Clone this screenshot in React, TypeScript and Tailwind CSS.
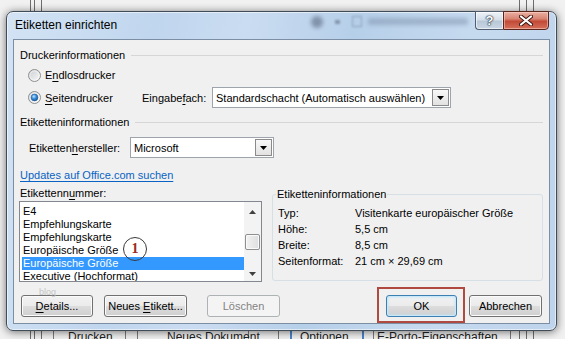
import React from "react";

function U({ children }: { children: React.ReactNode }) {
  return <span className="underline decoration-1 underline-offset-[2px]">{children}</span>;
}

function Radio({ checked = false }: { checked?: boolean }) {
  return (
    <svg width="13" height="13" viewBox="0 0 13 13" className="shrink-0">
      <defs>
        <linearGradient id="rbg" x1="0" y1="0" x2="1" y2="1">
          <stop offset="0" stopColor="#c9ccd1" />
          <stop offset="1" stopColor="#fafafa" />
        </linearGradient>
        <radialGradient id="rdot" cx="0.4" cy="0.35" r="0.75">
          <stop offset="0" stopColor="#bfe6ff" />
          <stop offset="0.45" stopColor="#3a8fde" />
          <stop offset="1" stopColor="#0c4c8f" />
        </radialGradient>
      </defs>
      <circle cx="6.5" cy="6.5" r="6" fill="url(#rbg)" stroke="#8e8f8f" strokeWidth="1" />
      <circle cx="6.5" cy="6.5" r="4.6" fill="none" stroke="#ffffff" strokeOpacity="0.55" strokeWidth="1" />
      {checked && <circle cx="6.5" cy="6.5" r="3.4" fill="url(#rdot)" stroke="#1a4f86" strokeWidth="0.5" />}
    </svg>
  );
}

function DropBtn() {
  return (
    <div className="m-px flex w-[17px] shrink-0 items-center justify-center self-stretch border border-[#8a8a8a] bg-[linear-gradient(to_bottom,#f8f8f8,#e2e2e2)]">
      <svg width="7" height="4" viewBox="0 0 7 4">
        <path d="M0 0H7L3.5 4Z" fill="#000" />
      </svg>
    </div>
  );
}

function Btn({
  children,
  className,
  disabled = false,
  focused = false,
}: {
  children: React.ReactNode;
  className: string;
  disabled?: boolean;
  focused?: boolean;
}) {
  const base = "flex h-[22px] items-center justify-center rounded-[3px] border ";
  const look = disabled
    ? "border-[#adb2b5] bg-[#f4f4f4] text-[#838383]"
    : focused
    ? "border-[#3c7fb1] bg-[linear-gradient(to_bottom,#f2f2f2_0%,#ebebeb_50%,#dddddd_50%,#cfcfcf_100%)] shadow-[inset_0_0_0_1px_#c8e8fa,inset_0_0_3px_1px_#bfe2f6] text-black"
    : "border-[#707070] bg-[linear-gradient(to_bottom,#f2f2f2_0%,#ebebeb_50%,#dddddd_50%,#cfcfcf_100%)] shadow-[inset_0_0_0_1px_#fbfbfb] text-black";
  return <div className={base + look + " " + className}>{children}</div>;
}

function Scrollbar() {
  return (
    <div className="flex w-[17px] shrink-0 flex-col bg-[#f3f3f3]">
      <div className="flex h-[17px] items-center justify-center pt-[3px]">
        <svg width="7" height="4" viewBox="0 0 7 4">
          <path d="M0 4H7L3.5 0Z" fill="#404040" />
        </svg>
      </div>
      <div className="flex flex-1 flex-col">
        <div className="h-[15px]" />
        <div className="mx-px h-[16px] rounded-[2px] border border-[#8e8f8f] bg-[linear-gradient(to_right,#f2f2f2,#dedede)] shadow-[inset_0_0_0_1px_#fafafa]" />
      </div>
      <div className="flex h-[17px] items-center justify-center pt-[2px]">
        <svg width="7" height="4" viewBox="0 0 7 4">
          <path d="M0 0H7L3.5 4Z" fill="#404040" />
        </svg>
      </div>
    </div>
  );
}

const items = [
  "E4",
  "Empfehlungskarte",
  "Empfehlungskarte",
  "Europäische Größe",
  "Europäische Größe",
  "Executive (Hochformat)",
];

const info: [string, string][] = [
  ["Typ:", "Visitenkarte europäischer Größe"],
  ["Höhe:", "5,5 cm"],
  ["Breite:", "8,5 cm"],
  ["Seitenformat:", "21 cm × 29,69 cm"],
];

function Backdrop() {
  const dark = [30, 34, 41, 519, 526, 533];
  const bottomLines = [53, 125, 137, 248, 278, 373, 510];
  const blueLines = [290, 362];
  return (
    <svg className="absolute inset-0" width="565" height="339" viewBox="0 0 565 339">
      {dark.map((x) => (
        <rect key={x} x={x} y="0" width="1" height="339" fill="#6e6e6e" />
      ))}
      {bottomLines.map((x) => (
        <rect key={"b" + x} x={x} y="330" width="1" height="9" fill="#7a7a7a" />
      ))}
      {blueLines.map((x) => (
        <rect key={"c" + x} x={x} y="330" width="2" height="9" fill="#4a86c8" />
      ))}
    </svg>
  );
}

export default function App() {
  return (
    <div className="relative h-[339px] w-[565px] overflow-hidden bg-[#f1f1f1] font-['Liberation_Sans',Arial,sans-serif] text-[11px] text-black">
      <Backdrop />
      <div className="absolute left-0 top-[330px] flex text-[12px] leading-[14px] text-[#222]">
        <div className="w-[68px]" />
        <div className="w-[99px]">Drucken</div>
        <div className="w-[133px]">Neues Dokument</div>
        <div className="w-[77px]">Optionen</div>
        <div>E-Porto-Eigenschaften</div>
      </div>

      {/* Dialog window */}
      <div className="absolute left-[6px] top-[11px] flex h-[320px] w-[551px] flex-col rounded-[7px] border border-[#414c59] bg-[linear-gradient(100deg,#d3e3f4_0%,#c0d6ee_25%,#cadcf1_40%,#b6cfe9_58%,#c6daef_78%,#bed4ec_100%)] shadow-[0_1px_8px_rgba(0,0,0,0.55),inset_0_0_0_1px_rgba(255,255,255,0.55)]">
        {/* Title bar */}
        <div className="relative flex h-[27px] shrink-0 items-start">
          <div className="absolute left-[304px] top-[4px] h-[12px] w-[12px] rounded-full bg-[#56667c] opacity-60 blur-[2px]" />
          <div className="absolute left-[328px] top-[8px] h-[4px] w-[5px] bg-[#5f6f86] opacity-60 blur-[1px]" />
          <div className="absolute left-[345px] top-[4px] h-[11px] w-[10px] border border-[#6f8099] opacity-60 blur-[1px]" />
          <div className="absolute left-[361px] top-[6px] h-[7px] w-[100px] bg-[#7c8fa9] opacity-50 blur-[2px]" />
          <span className="relative ml-[8px] mt-[6px] text-[12px] leading-[14px] text-black">Etiketten einrichten</span>
          <div className="flex-1" />
          <div className="relative mr-[7px] -mt-[1px] flex h-[19px]">
            <div className="flex w-[28px] items-center justify-center rounded-bl-[4px] border border-r-0 border-[#505d6e] bg-[linear-gradient(to_bottom,#eef3f8_0%,#d5dfea_45%,#b9c8d8_55%,#c9d6e4_100%)] shadow-[inset_0_0_0_1px_rgba(255,255,255,0.6)]">
              <span className="text-[13px] font-bold leading-none text-white [text-shadow:0_0_1px_#1d2a38,0_0_1px_#1d2a38,0_0_2px_#1d2a38]">?</span>
            </div>
            <div className="flex w-[46px] items-center justify-center rounded-br-[4px] border border-[#5a241c] bg-[linear-gradient(to_bottom,#eab0a2_0%,#d98473_40%,#c24a36_55%,#d5705c_100%)] shadow-[inset_0_0_0_1px_rgba(255,220,210,0.5)]">
              <svg width="14" height="11" viewBox="0 0 14 11">
                <path d="M2 1.5L12 9.5M12 1.5L2 9.5" stroke="#3b1510" strokeWidth="4" strokeLinecap="round" />
                <path d="M2 1.5L12 9.5M12 1.5L2 9.5" stroke="#ffffff" strokeWidth="2.2" strokeLinecap="round" />
              </svg>
            </div>
          </div>
        </div>

        {/* Client area */}
        <div className="mx-[6px] mb-[6px] flex flex-1 flex-col border border-[#7c8ea3] bg-[#f0f0f0]">
          <div className="mt-[8px] flex h-[14px] items-center gap-[6px] px-[6px] leading-[14px]">
            <span>Druckerinformationen</span>
            <div className="h-px flex-1 bg-[#d6d6d6]" />
          </div>

          <div className="mt-[6px] flex h-[14px] items-center pl-[14px] leading-[14px]">
            <Radio />
            <span className="ml-[4px]">
              E<U>n</U>dlosdrucker
            </span>
          </div>

          <div className="mt-[5px] flex h-[21px] items-center pl-[14px] leading-[14px]">
            <Radio checked />
            <span className="ml-[4px] w-[97px]">
              <U>S</U>eitendrucker
            </span>
            <span className="w-[70px]">
              Eingabe<U>f</U>ach:
            </span>
            <div className="flex h-[21px] w-[239px] items-center border border-[#9ea4ab] bg-white">
              <span className="flex-1 pl-[3px]">Standardschacht (Automatisch auswählen)</span>
              <DropBtn />
            </div>
          </div>

          <div className="mt-[7px] flex h-[14px] items-center gap-[6px] px-[6px] leading-[14px]">
            <span>Etiketteninformationen</span>
            <div className="h-px flex-1 bg-[#d6d6d6]" />
          </div>

          <div className="mt-[8px] flex h-[21px] items-center pl-[15px] leading-[14px]">
            <span className="w-[101px]">
              Etiketten<U>h</U>ersteller:
            </span>
            <div className="flex h-[21px] w-[144px] items-center border border-[#9ea4ab] bg-white">
              <span className="flex-1 pl-[3px]">Microsoft</span>
              <DropBtn />
            </div>
          </div>

          <div className="mt-[10px] flex h-[14px] items-center pl-[6px] leading-[14px]">
            <span className="text-[#0863c4] underline decoration-1 underline-offset-[2px]">Updates auf Office.com suchen</span>
          </div>

          <div className="mt-[4px] flex gap-[10px] pl-[5px]">
            <div className="flex w-[243px] flex-col">
              <div className="h-[14px] pl-px leading-[14px]">
                Etikettenn<U>u</U>mmer:
              </div>
              <div className="mt-px flex h-[81px] border border-[#828790] bg-white">
                <div className="flex-1 overflow-hidden pl-[2px] pt-[3px]">
                  {items.map((t, i) => (
                    <div
                      key={i}
                      className={
                        i === 4
                          ? "h-[13px] bg-[#3399ff] pl-px leading-[13px] text-white"
                          : "h-[13px] pl-px leading-[13px]"
                      }
                    >
                      {t}
                    </div>
                  ))}
                </div>
                <Scrollbar />
              </div>
            </div>

            <div className="relative mt-[8px] h-[87px] w-[271px] rounded-[3px] border border-[#d5dfe5] pl-[5px] pt-[10px]">
              <span className="absolute left-[3px] top-[-8px] bg-[#f0f0f0] px-px leading-[14px]">Etiketteninformationen</span>
              <div className="grid grid-cols-[77px_1fr] leading-[16px]">
                {info.map(([k, v]) => (
                  <React.Fragment key={k}>
                    <span>{k}</span>
                    <span>{v}</span>
                  </React.Fragment>
                ))}
              </div>
            </div>
          </div>

          <div className="mt-[13px] flex items-center px-[7px] leading-[14px]">
            <Btn className="w-[72px]">
              <span>
                <U>D</U>etails...
              </span>
            </Btn>
            <Btn className="ml-[11px] w-[83px]">
              <span>
                Neues <U>E</U>tikett...
              </span>
            </Btn>
            <Btn className="ml-[20px] w-[73px]" disabled>
              Löschen
            </Btn>
            <div className="flex-1" />
            <Btn className="w-[71px]" focused>
              OK
            </Btn>
            <Btn className="ml-[12px] w-[73px]">Abbrechen</Btn>
          </div>
        </div>
      </div>

      {/* Annotations */}
      <div className="absolute left-[39px] top-[287px] text-[9px] leading-[10px] text-[#c4c4c4]">blog</div>
      <div className="absolute left-[123px] top-[237px] flex h-[24px] w-[24px] items-center justify-center rounded-full border-[1.5px] border-[#3a3a3a]">
        <span className="font-['Liberation_Serif',serif] text-[14px] font-bold leading-none text-[#9c2a1e]">1</span>
      </div>
      <div className="absolute left-[377px] top-[287px] h-[36px] w-[88px] border-2 border-[#b04a40]" />
    </div>
  );
}
